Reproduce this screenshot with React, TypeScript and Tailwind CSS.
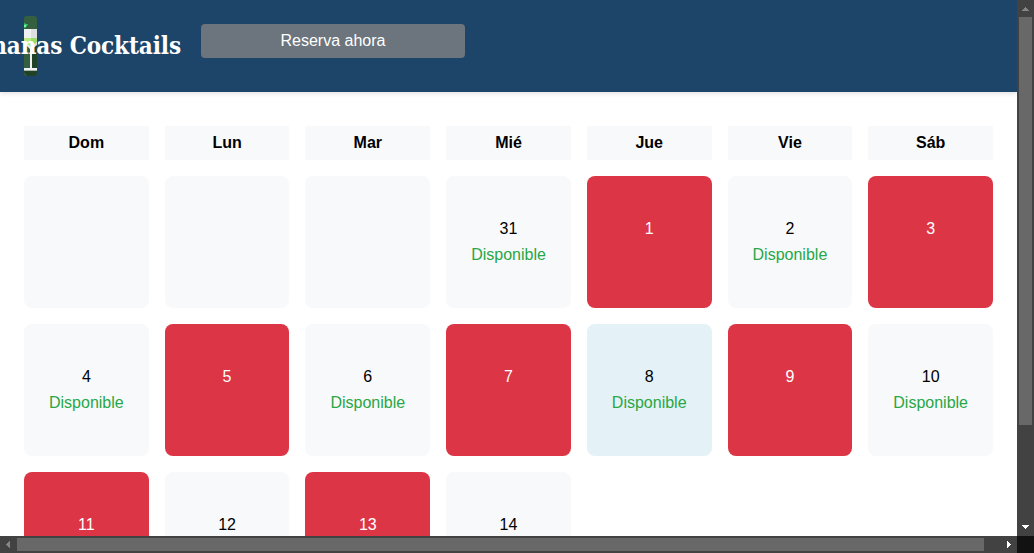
const weekdays = ["Dom", "Lun", "Mar", "Mié", "Jue", "Vie", "Sáb"];

type Day = { label: string; state: "empty" | "free" | "busy" | "today" };

const empty: Day = { label: "", state: "empty" };
const free = (n: number): Day => ({ label: String(n), state: "free" });
const busy = (n: number): Day => ({ label: String(n), state: "busy" });

const days: Day[] = [
  empty, empty, empty, free(31), busy(1), free(2), busy(3),
  free(4), busy(5), free(6), busy(7), { label: "8", state: "today" }, busy(9), free(10),
  busy(11), free(12), busy(13), free(14),
];

const tones = {
  empty: "bg-[#f8f9fb]",
  free: "bg-[#f8f9fb] text-black",
  busy: "bg-[#dc3545] text-white",
  today: "bg-[#e4f1f7] text-black",
};

function DayCell({ day }: { day: Day }) {
  const available = day.state === "free" || day.state === "today";
  return (
    <div className={`h-[132px] rounded-lg pt-10 text-center leading-[26px] ${tones[day.state]}`}>
      <div>{day.label}</div>
      {available && <div className="text-[#28a745]">Disponible</div>}
    </div>
  );
}

function Logo() {
  return (
    <svg className="h-[60px] w-[13px] rounded-[3px]" viewBox="0 0 13 60">
      <rect width="13" height="60" fill="#34603f" />
      <path d="M7 32L13 29V60H3L0 56V54H7Z" fill="#204327" />
      <path d="M0 7L2 8H4L3 10L1 12H0Z" fill="#2ecc71" />
      <rect y="9" width="2" height="2" fill="#8ee68c" />
      <path d="M0 13H7V34L0 27Z" fill="#f0f1f2" />
      <path d="M7 13H13V29L7 34Z" fill="#dedfe1" />
      <path d="M0 22H7V31L0 26Z" fill="#b7ed80" />
      <path d="M7 22H13V26L7 31Z" fill="#9bdc6d" />
      <rect x="6" y="32" width="2" height="20" fill="#f0f1f2" />
      <rect y="52" width="13" height="2" fill="#f0f1f2" />
      <rect y="54" width="13" height="1" fill="#a9b5ac" />
    </svg>
  );
}

function Header() {
  return (
    <header className="relative z-10 flex h-[92px] shrink-0 items-start bg-[#1d4469] pl-6 shadow-[0_2px_4px_rgba(0,0,0,0.1)]">
      <div className="mt-4 w-[13px]">
        <Logo />
      </div>
      <h1 className="absolute right-[836px] top-[29px] whitespace-nowrap font-['DejaVu_Serif_Condensed','DejaVu_Serif',serif] text-[24px] font-bold leading-[34px] tracking-[-0.1px] text-white [font-stretch:condensed]">
        Bananas Cocktails
      </h1>
      <button className="ml-[164px] mt-6 h-[34px] w-[264px] rounded bg-[#6c757d] text-base text-white">
        Reserva ahora
      </button>
    </header>
  );
}

function VerticalScrollbar() {
  return (
    <div className="flex flex-col items-center bg-[#424242]">
      <svg className="h-[17px] w-[17px] shrink-0" viewBox="0 0 17 17" shapeRendering="crispEdges">
        <path d="M8 7h1v1h1v1h1v1h1v1H5v-1h1V9h1V8h1z" fill="#858585" />
      </svg>
      <div className="h-[408px] w-[13px] bg-[#686868]" />
      <svg className="mt-auto h-[17px] w-[17px] shrink-0" viewBox="0 0 17 17" shapeRendering="crispEdges">
        <path d="M5 6h7v1h-1v1h-1v1H9v1H8V9H7V8H6V7H5z" fill="#fff" />
      </svg>
    </div>
  );
}

function HorizontalScrollbar() {
  return (
    <div className="flex h-[17px] shrink-0 items-center bg-[#424242]">
      <svg className="h-[17px] w-[17px] shrink-0" viewBox="0 0 17 17" shapeRendering="crispEdges">
        <path d="M10 5v7H9v-1H8v-1H7V9H6V8h1V7h1V6h1V5z" fill="#858585" />
      </svg>
      <div className="h-[13px] w-[967px] bg-[#686868]" />
      <svg className="ml-auto h-[17px] w-[17px] shrink-0" viewBox="0 0 17 17" shapeRendering="crispEdges">
        <path d="M7 5v7h1v-1h1v-1h1V9h1V8h-1V7H9V6H8V5z" fill="#fff" />
      </svg>
      <div className="h-[17px] w-[17px] shrink-0 bg-[#121212]" />
    </div>
  );
}

export default function App() {
  return (
    <div className="flex h-[553px] w-[1034px] flex-col overflow-hidden bg-white font-['Liberation_Sans',Arial,sans-serif] text-base text-black">
      <div className="flex h-[536px] shrink-0 overflow-hidden">
        <div className="flex w-[1017px] flex-col overflow-hidden">
          <Header />
          <main className="grid grid-cols-7 gap-4 px-6 pt-[34px]">
            {weekdays.map((name) => (
              <div key={name} className="h-[34px] bg-[#f8f9fb] text-center font-bold leading-[34px]">
                {name}
              </div>
            ))}
            {days.map((day, i) => (
              <DayCell key={i} day={day} />
            ))}
          </main>
        </div>
        <VerticalScrollbar />
      </div>
      <HorizontalScrollbar />
    </div>
  );
}
